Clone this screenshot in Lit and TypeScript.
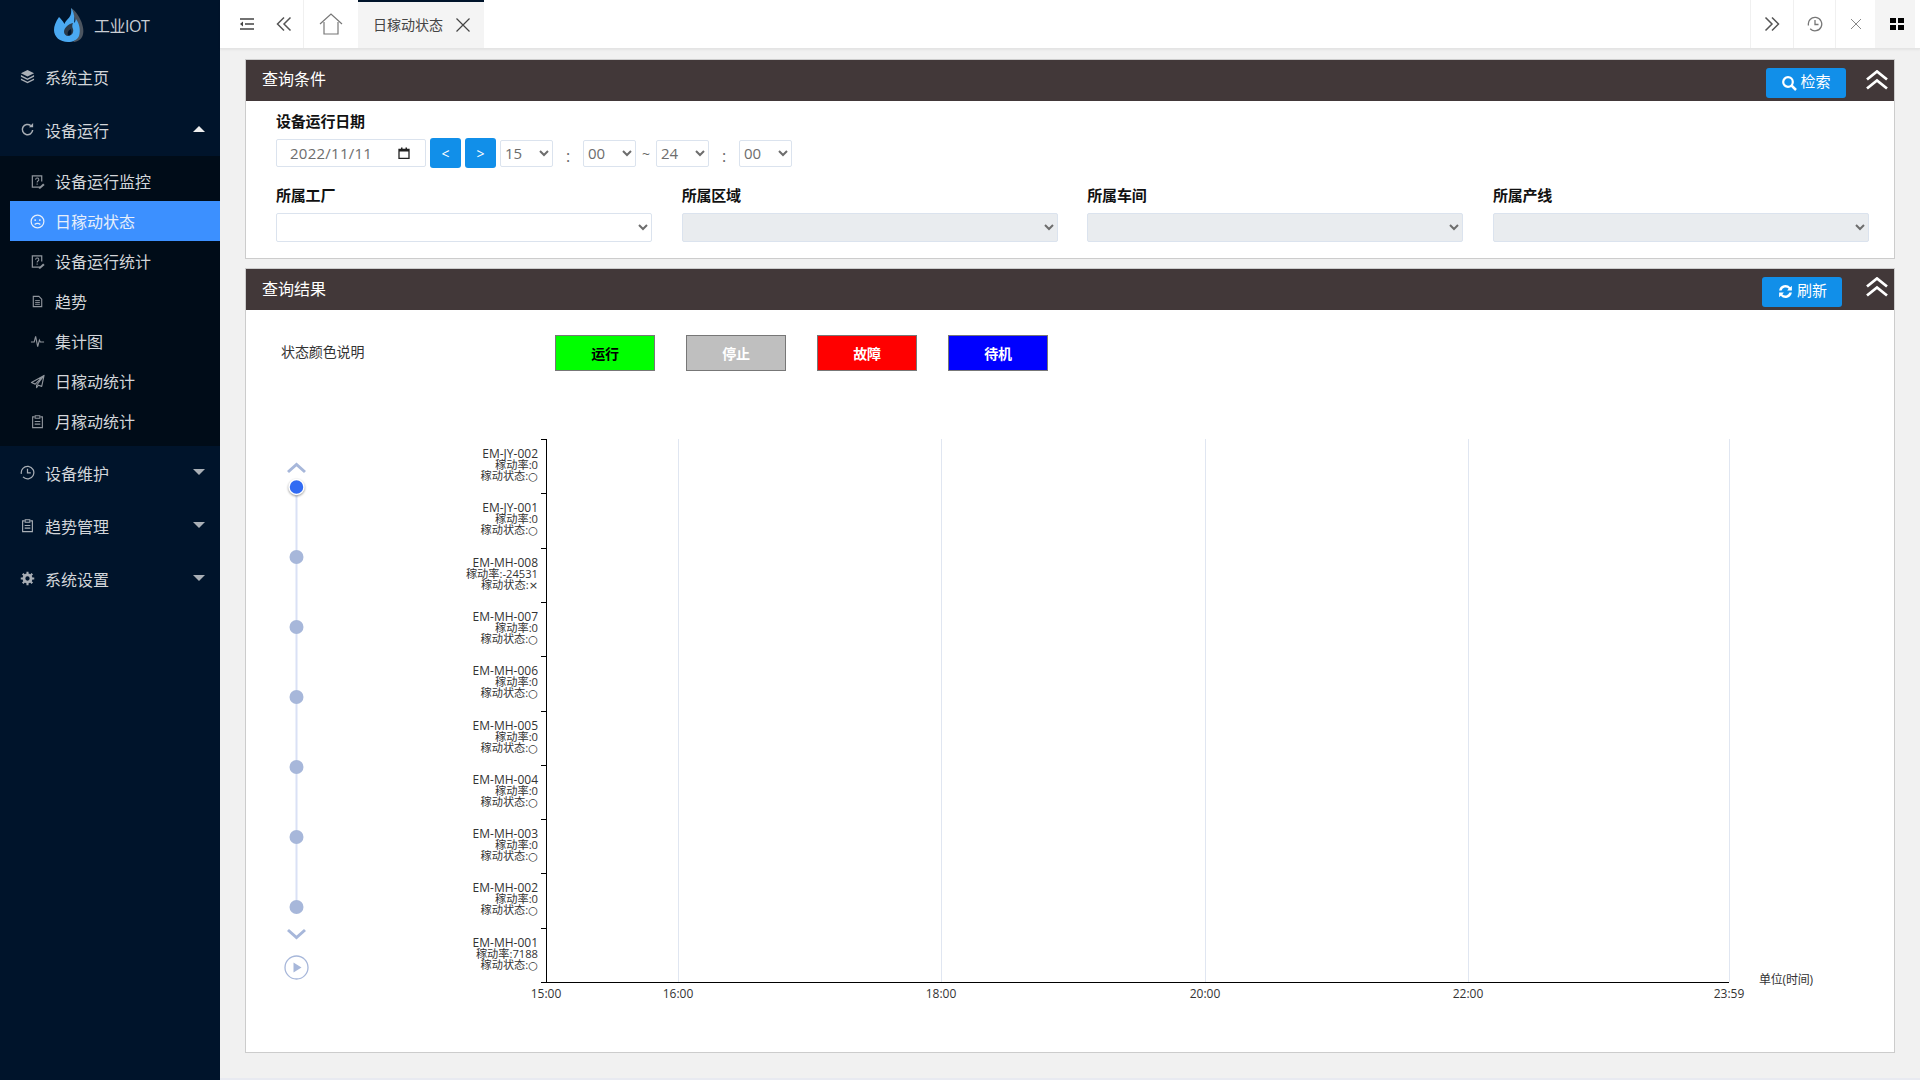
import { LitElement, html, css, svg } from 'lit';
import { customElement } from 'lit/decorators.js';

const icons: Record<string, unknown> = {
  stack: svg`<path d="M8 1 15 4.500 8 8 1 4.500z" fill="currentColor"/><path d="M1 6.500l7 3.500 7-3.500v1.700L8 11.700 1 8.200z" fill="currentColor"/><path d="M1 10l7 3.500 7-3.500v1.700L8 15.200 1 11.700z" fill="currentColor"/>`,
  refresh: svg`<path d="M13.500 8.500A5.500 5.500 0 1 1 11.500 3.800" fill="none" stroke="currentColor" stroke-width="1.600"/><path d="M9.500 5.500h4.500V1z" fill="currentColor"/>`,
  edit: svg`<path d="M11 14H2.500V2h10v6" fill="none" stroke="currentColor" stroke-width="1.300"/><path d="M6 6a1.700 1.700 0 1 1 2.500 1.500c-.7.400-.9.800-.9 1.500M7.600 10.200v1.300" fill="none" stroke="currentColor" stroke-width="1.100"/><path d="M9 15l5-5 1.600 1.600-5 4.400z" fill="currentColor"/>`,
  sad: svg`<circle cx="8" cy="8" r="6.800" fill="none" stroke="currentColor" stroke-width="1.300"/><circle cx="5.500" cy="6.500" r="1" fill="currentColor"/><circle cx="10.500" cy="6.500" r="1" fill="currentColor"/><path d="M5 11.200c1.600-1.600 4.400-1.600 6 0" fill="none" stroke="currentColor" stroke-width="1.200"/>`,
  doc: svg`<path d="M3.500 2.500h6l3 3v8h-9z" fill="none" stroke="currentColor" stroke-width="1.200"/><path d="M5.500 7h5M5.500 9h5M5.500 11h5" stroke="currentColor"/>`,
  pulse: svg`<path d="M1 8.500h3.500l1.500-6 2.200 11 1.800-7 1 2h4" fill="none" stroke="currentColor" stroke-width="1.200"/>`,
  plane: svg`<path d="M15 1.500 1.500 9l4 1.800L15 1.500 7 12v2.500l2-2.600 3.500 1.300z" fill="none" stroke="currentColor" stroke-width="1.200" stroke-linejoin="round"/>`,
  clip: svg`<path d="M5 3H2.800v11.500h10.400V3H11" fill="none" stroke="currentColor" stroke-width="1.200"/><path d="M5.500 1.800h5v2.700h-5z" fill="none" stroke="currentColor" stroke-width="1.100"/><path d="M5 8h6M5 10.800h6" stroke="currentColor" stroke-width="1.100"/>`,
  clock: svg`<path d="M1.500 9.500A6.700 6.700 0 1 1 3.200 12.700" fill="none" stroke="currentColor" stroke-width="1.300"/><path d="M8 4V8.500H11.500" fill="none" stroke="currentColor" stroke-width="1.300"/>`,
  gear: svg`<circle cx="8" cy="8" r="3.800" fill="none" stroke="currentColor" stroke-width="3"/><path d="M8 .8v3M8 12.200v3M.8 8h3M12.200 8h3M2.900 2.900 5 5M11 11l2.100 2.100M13.100 2.900 11 5M5 11l-2.100 2.100" stroke="currentColor" stroke-width="2.200"/>`,
};

const icon = (name: string) =>
  html`<svg class="ico" viewBox="0 0 16 16" width="15" height="15">${icons[name]}</svg>`;

const subMenu = [
  ['edit', '设备运行监控'],
  ['sad', '日稼动状态'],
  ['edit', '设备运行统计'],
  ['doc', '趋势'],
  ['pulse', '集计图'],
  ['plane', '日稼动统计'],
  ['clip', '月稼动统计'],
];

const machines = [
  ['EM-JY-002', '0', '○'],
  ['EM-JY-001', '0', '○'],
  ['EM-MH-008', '-24531', '×'],
  ['EM-MH-007', '0', '○'],
  ['EM-MH-006', '0', '○'],
  ['EM-MH-005', '0', '○'],
  ['EM-MH-004', '0', '○'],
  ['EM-MH-003', '0', '○'],
  ['EM-MH-002', '0', '○'],
  ['EM-MH-001', '7188', '○'],
];

const xLabels: [number, string][] = [
  [546, '15:00'],
  [678, '16:00'],
  [941, '18:00'],
  [1205, '20:00'],
  [1468, '22:00'],
  [1729, '23:59'],
];

const legend = [
  ['运行', 'run'],
  ['停止', 'stop'],
  ['故障', 'fault'],
  ['待机', 'wait'],
];

const doubleUp = html`<svg class="collapse" viewBox="0 0 22 20" width="22" height="20">
  <path d="M1 9.500 11 1.500l10 8M1 18.500 11 10.500l10 8" fill="none" stroke="#fff" stroke-width="2.800"/>
</svg>`;

@customElement('app-root')
export class AppRoot extends LitElement {
  static styles = css`
    :host {
      display: flex;
      width: 1920px;
      height: 1080px;
      overflow: hidden;
      font-family: "Open Sans", "Noto Sans CJK SC", sans-serif;
      background: #f1f1f1;
    }
    .side {
      width: 220px;
      flex: none;
      background: #00142b;
      color: #d3d6da;
      font-size: 16px;
    }
    .logo {
      height: 50px;
      display: flex;
      align-items: center;
      padding-left: 54px;
      gap: 10px;
      color: #c9ced4;
      font-size: 16px;
      letter-spacing: -0.5px;
    }
    .top-item {
      height: 53px;
      display: flex;
      align-items: center;
      padding-left: 20px;
      gap: 10px;
    }
    .top-item .ico {
      color: #a9afb6;
    }
    .caret {
      margin-left: auto;
      margin-right: 15px;
      width: 0;
      height: 0;
      border-left: 6px solid transparent;
      border-right: 6px solid transparent;
      border-top: 6px solid #a9afb6;
      margin-top: -1px;
    }
    .caret.open {
      border-top: 0;
      border-bottom: 6px solid #eee;
    }
    .sub {
      background: #000c18;
      padding: 5px 0;
    }
    .sub-item {
      height: 40px;
      margin-left: 10px;
      display: flex;
      align-items: center;
      padding-left: 20px;
      gap: 10px;
    }
    .sub-item .ico {
      color: #8f959c;
    }
    .sub-item.active {
      background: #3c90ff;
      color: #e6eefa;
    }
    .sub-item.active .ico {
      color: #e6eefa;
    }
    .main {
      flex: 1;
      min-width: 0;
      display: flex;
      flex-direction: column;
    }
    .top {
      height: 48px;
      flex: none;
      background: #fff;
      border-bottom: 1px solid #e4e4e4;
      box-shadow: 0 1px 2px rgba(0, 0, 0, 0.06);
      display: flex;
      align-items: stretch;
      color: #555;
    }
    .tool {
      display: flex;
      align-items: center;
      justify-content: center;
    }
    .tool.b-r {
      border-right: 1px solid #f0f0f0;
    }
    .tool.b-l {
      border-left: 1px solid #f0f0f0;
    }
    .tab {
      width: 126px;
      box-sizing: border-box;
      background: #f4f4f4;
      border-top: 2px solid #00142b;
      display: flex;
      align-items: center;
      padding: 0 0 0 15px;
      gap: 13px;
      font-size: 14px;
      color: #444;
    }
    .tab span {
      padding-bottom: 3px;
    }
    .spacer {
      flex: 1;
    }
    .grid-btn {
      width: 40px;
      box-sizing: border-box;
      padding-left: 4px;
      background: #f4f4f4;
      margin-right: 5px;
    }
    .content {
      flex: 1;
      padding: 10px 25px 0 25px;
      display: flex;
      flex-direction: column;
      gap: 9px;
      min-height: 0;
    }
    .panel {
      border: 1px solid #ccc;
      background: #fff;
      box-sizing: border-box;
    }
    .panel.query {
      height: 200px;
    }
    .panel.result {
      height: 785px;
    }
    .head {
      height: 41px;
      background: #423839;
      color: #fff;
      display: flex;
      align-items: center;
      padding-left: 16px;
      font-size: 16px;
      position: relative;
    }
    .head > span {
      padding-bottom: 3px;
    }
    .query .head > span {
      padding-bottom: 5px;
    }
    .head .blue {
      margin-left: auto;
    }
    .query .blue {
      margin-right: 48px;
      margin-top: 4px;
    }
    .result .blue {
      margin-right: 52px;
      margin-top: 4px;
    }
    .collapse {
      position: absolute;
      right: 6px;
      top: 10px;
    }
    .result .collapse {
      top: 8px;
    }
    .blue {
      width: 80px;
      height: 30px;
      box-sizing: border-box;
      border: 0;
      border-radius: 3px;
      background: #118fe9;
      color: #fff;
      font: 15px "Open Sans", "Noto Sans CJK SC", sans-serif;
      display: flex;
      align-items: center;
      justify-content: center;
      gap: 3px;
      padding: 0 0 5px;
    }
    .blue svg {
      margin-top: 5px;
    }
    .form {
      padding: 9px 25px 0 30px;
    }
    label {
      display: block;
      font-size: 15px;
      font-weight: 700;
      color: #111;
      line-height: 22px;
      letter-spacing: -0.2px;
    }
    .date-row {
      display: flex;
      align-items: center;
      height: 30px;
      margin-top: 6px;
    }
    .date {
      width: 150px;
      height: 28px;
      box-sizing: border-box;
      border: 1px solid #dbe3ee;
      border-radius: 2px;
      display: flex;
      align-items: center;
      justify-content: space-between;
      padding: 0 15px 0 13px;
      font-size: 15px;
      letter-spacing: 0.25px;
      color: #6d6d6d;
      margin-right: 4px;
    }
    .nav {
      width: 31px;
      height: 30px;
      border: 0;
      border-radius: 3px;
      background: #118fe9;
      color: #fff;
      font: 14px "Open Sans", sans-serif;
      margin-right: 4px;
      padding: 0;
    }
    select {
      box-sizing: border-box;
      border: 1px solid #dbe3ee;
      border-radius: 2px;
      background-color: #fff;
      color: #6d6d6d;
      font: 15px "Open Sans", "Noto Sans CJK SC", sans-serif;
      padding: 0;
    }
    .time {
      width: 53px;
      height: 27px;
    }
    .colon {
      width: 30px;
      text-align: center;
      color: #666;
      font-size: 16px;
      padding-top: 5px;
    }
    .tilde {
      width: 20px;
      text-align: center;
      color: #666;
      font-size: 14px;
    }
    .org-row {
      display: grid;
      grid-template-columns: repeat(4, 376px);
      justify-content: space-between;
      margin-top: 16px;
    }
    .org select {
      display: block;
      width: 100%;
      height: 29px;
      margin-top: 7px;
    }
    .org select:disabled {
      background-color: #e9ecef;
      opacity: 1;
    }
    .legend {
      display: flex;
      align-items: center;
      padding: 25px 0 0 35px;
      font-size: 14px;
      color: #333;
      height: 36px;
    }
    .legend-title {
      width: 274px;
      margin-top: -5px;
      letter-spacing: -0.1px;
    }
    .swatches {
      display: flex;
      gap: 31px;
    }
    .swatch {
      width: 100px;
      height: 36px;
      box-sizing: border-box;
      border: 1px solid #777;
      display: flex;
      align-items: center;
      justify-content: center;
      font-weight: 700;
      color: #fff;
      letter-spacing: -0.2px;
    }
    .swatch.run {
      background: #00ff00;
      color: #000;
    }
    .swatch.stop {
      background: #bfbfbf;
    }
    .swatch.fault {
      background: #ff0000;
    }
    .swatch.wait {
      background: #0000ff;
    }
    .chart {
      display: block;
      margin-top: 60px;
    }
    .chart text {
      fill: #333;
      font-size: 12px;
    }
    .chart .mark {
      font-family: "DejaVu Sans", sans-serif;
    }
    .bottom-strip {
      height: 2px;
      background: #e8eaf1;
      flex: none;
    }
  `;

  // the chart svg starts at page (246, 431), so drawing is done in page coords and shifted
  private renderChart() {
    const ox = 246;
    const oy = 431;
    const top = 439;
    const bottom = 982;
    const left = 546;
    const right = 1729;
    const step = (bottom - top) / machines.length;
    const dots = [487, 557, 627, 697, 767, 837, 907];
    const tl = 296.5;
    return html`<svg class="chart" width="1648" height="620" viewBox="${ox} ${oy} 1648 620">
      ${xLabels.slice(1).map(
        ([x]) => svg`<line x1=${x + 0.5} x2=${x + 0.5} y1=${top} y2=${bottom} stroke="#e0e6f1"/>`
      )}
      <line x1=${left + 0.5} x2=${left + 0.5} y1=${top} y2=${bottom + 1} stroke="#000" stroke-width="1"/>
      <line x1=${left - 5} x2=${right} y1=${bottom + 0.5} y2=${bottom + 0.5} stroke="#000"/>
      ${machines.map((m, i) => {
        const y = top + step * i;
        const ty = Math.round(y);
        return svg`
          <line x1=${left - 5} x2=${left} y1=${ty + 0.5} y2=${ty + 0.5} stroke="#000"/>
          <text x="538" y=${ty + 18.5} text-anchor="end">${m[0]}</text>
          <text x="538" y=${ty + 29.5} text-anchor="end" style="font-size:11.2px">稼动率:${m[1]}</text>
          <text x="538" y=${ty + 40.5} text-anchor="end" style="font-size:11.2px">稼动状态:<tspan class="mark">${m[2]}</tspan></text>`;
      })}
      ${xLabels.map(
        ([x, t]) => svg`<text x=${x} y="998" text-anchor="middle">${t}</text>`
      )}
      <text x="1759" y="984" style="font-size:12px;letter-spacing:-0.2px">单位(时间)</text>

      <line x1=${tl} x2=${tl} y1="487" y2="907" stroke="#dae1f5" stroke-width="2"/>
      <path d="M288 472 296.500 464.500 305 472" fill="none" stroke="#a7b7da" stroke-width="3"/>
      ${dots.map((y, i) =>
        i === 0
          ? svg`<circle cx=${tl} cy=${y} r="7.500" fill="#316bf3" stroke="#fff" stroke-width="1.500" style="filter:drop-shadow(0 1px 1px rgba(0,0,0,.4))"/>`
          : svg`<circle cx=${tl} cy=${y} r="7" fill="#a7b7da"/>`
      )}
      <path d="M288 930 296.500 937.500 305 930" fill="none" stroke="#a7b7da" stroke-width="3"/>
      <circle cx=${tl} cy="967.500" r="11.500" fill="none" stroke="#a7b7da" stroke-width="1.300"/>
      <path d="M293.500 962.500 301.500 967.500 293.500 972.500z" fill="#a7b7da"/>
    </svg>`;
  }

  render() {
    return html`
      <aside class="side">
        <div class="logo">
          <svg viewBox="0 0 30 34" width="30" height="34">
            <path d="M17 0c4 2 8 8 10.500 14 2 6 2.500 10 1 14-1.500 3.500-5 6-9.500 6 4-3 5-8 4-14C22 12 19 6 17 0z" fill="#4c5560"/>
            <path d="M17 0c1 6-1 9-4 12-1 1-2 2-2.500 4C9 13 7 11 5 9 1.500 14 0 18 0 22c0 7 6 12 14 12 5 0 9-2 11-6 2-6 0-13-3-17-.5 2-1 3-2 4C21 10 20 4 17 0z" fill="#4aa9f2"/>
            <path d="M10 24c0-4 4-8 9-9-1 2-1 4 0 6 1 3-1 7-5 7-2 0-4-2-4-4z" fill="#2b3a4a"/>
            <path d="M14 27c-1-3 1-5 3-6 0 2 1 3 0 5-.5 1-2 2-3 1z" fill="#00142b"/>
          </svg>
          <span>工业IOT</span>
        </div>
        <div class="top-item">${icon('stack')}<span>系统主页</span></div>
        <div class="top-item">${icon('refresh')}<span>设备运行</span><i class="caret open"></i></div>
        <div class="sub">
          ${subMenu.map(
            ([ic, t], i) =>
              html`<div class="sub-item ${i === 1 ? 'active' : ''}">${icon(ic)}<span>${t}</span></div>`
          )}
        </div>
        <div class="top-item">${icon('clock')}<span>设备维护</span><i class="caret"></i></div>
        <div class="top-item">${icon('clip')}<span>趋势管理</span><i class="caret"></i></div>
        <div class="top-item">${icon('gear')}<span>系统设置</span><i class="caret"></i></div>
      </aside>

      <div class="main">
        <header class="top">
          <div class="tool" style="width:54px">
            <svg viewBox="0 0 16 16" width="16" height="16">
              <path d="M1 3h14M6 8h9M1 13h14" stroke="#444" stroke-width="1.500"/>
              <path d="M4 5.500 1 8l3 2.500z" fill="#444"/>
            </svg>
          </div>
          <div class="tool b-r" style="width:30px;padding-right:10px;box-sizing:border-box">
            <svg viewBox="0 0 16 16" width="16" height="16">
              <path d="M8 1.500 1.500 8 8 14.500M14.500 1.500 8 8l6.500 6.500" fill="none" stroke="#555" stroke-width="1.500"/>
            </svg>
          </div>
          <div class="tool" style="width:54px">
            <svg viewBox="0 0 24 22" width="24" height="22">
              <path d="M1 11 12 1l11 10M5 9v12h14V9" fill="none" stroke="#777" stroke-width="1.200"/>
            </svg>
          </div>
          <div class="tab">
            <span>日稼动状态</span>
            <svg viewBox="0 0 14 14" width="14" height="14">
              <path d="M0.500 0.500 13.500 13.500M13.500 0.500 0.500 13.500" stroke="#444" stroke-width="1.200"/>
            </svg>
          </div>
          <div class="spacer"></div>
          <div class="tool b-l" style="width:42px">
            <svg viewBox="0 0 16 16" width="16" height="16">
              <path d="M1.500 1.500 8 8l-6.500 6.500M8 1.500 14.500 8 8 14.500" fill="none" stroke="#555" stroke-width="1.500"/>
            </svg>
          </div>
          <div class="tool b-l" style="width:41px">
            <svg viewBox="0 0 16 16" width="16" height="16" style="color:#777">${icons.clock}</svg>
          </div>
          <div class="tool b-l" style="width:39px">
            <svg viewBox="0 0 12 12" width="12" height="12">
              <path d="M1 1 11 11M11 1 1 11" stroke="#888" stroke-width="1"/>
            </svg>
          </div>
          <div class="tool grid-btn">
            <svg viewBox="0 0 14 12" width="14" height="12">
              <path d="M0 0h6v5H0zM8 0h6v5H8zM0 7h6v5H0zM8 7h6v5H8z" fill="#000"/>
            </svg>
          </div>
        </header>

        <div class="content">
          <section class="panel query">
            <div class="head">
              <span>查询条件</span>
              <button class="blue">
                <svg viewBox="0 0 16 16" width="16" height="16">
                  <circle cx="7" cy="7" r="4.800" fill="none" stroke="#fff" stroke-width="2.200"/>
                  <path d="M10.500 10.500 15 15" stroke="#fff" stroke-width="2.500"/>
                </svg>检索
              </button>
              ${doubleUp}
            </div>
            <div class="form">
              <label>设备运行日期</label>
              <div class="date-row">
                <div class="date">
                  <span>2022/11/11</span>
                  <svg viewBox="0 0 12 12" width="12" height="12">
                    <path d="M1 2.500h10v9H1z" fill="none" stroke="#222" stroke-width="1.300"/>
                    <path d="M1 2h10v2.500H1zM3 0.500h1.500V2H3zM7.500 0.500H9V2H7.500z" fill="#222"/>
                  </svg>
                </div>
                <button class="nav">&lt;</button>
                <button class="nav">&gt;</button>
                <select class="time"><option>15</option></select>
                <span class="colon">:</span>
                <select class="time"><option>00</option></select>
                <span class="tilde">~</span>
                <select class="time"><option>24</option></select>
                <span class="colon">:</span>
                <select class="time"><option>00</option></select>
              </div>
              <div class="org-row">
                <div class="org"><label>所属工厂</label><select><option></option></select></div>
                <div class="org"><label>所属区域</label><select disabled><option></option></select></div>
                <div class="org"><label>所属车间</label><select disabled><option></option></select></div>
                <div class="org"><label>所属产线</label><select disabled><option></option></select></div>
              </div>
            </div>
          </section>

          <section class="panel result">
            <div class="head">
              <span>查询结果</span>
              <button class="blue">
                <svg viewBox="0 0 16 16" width="17" height="17">
                  <path d="M2 7a6 6 0 0 1 10.500-3L14 2.500V7H9.500l1.500-1.500A4 4 0 0 0 4.300 7zM14 9a6 6 0 0 1-10.500 3L2 13.500V9h4.500L5 10.500A4 4 0 0 0 11.700 9z" fill="#fff"/>
                </svg>刷新
              </button>
              ${doubleUp}
            </div>
            <div class="legend">
              <span class="legend-title">状态颜色说明</span>
              <div class="swatches">
                ${legend.map(([t, c]) => html`<div class="swatch ${c}">${t}</div>`)}
              </div>
            </div>
            ${this.renderChart()}
          </section>
        </div>
        <div class="bottom-strip"></div>
      </div>
    `;
  }
}
